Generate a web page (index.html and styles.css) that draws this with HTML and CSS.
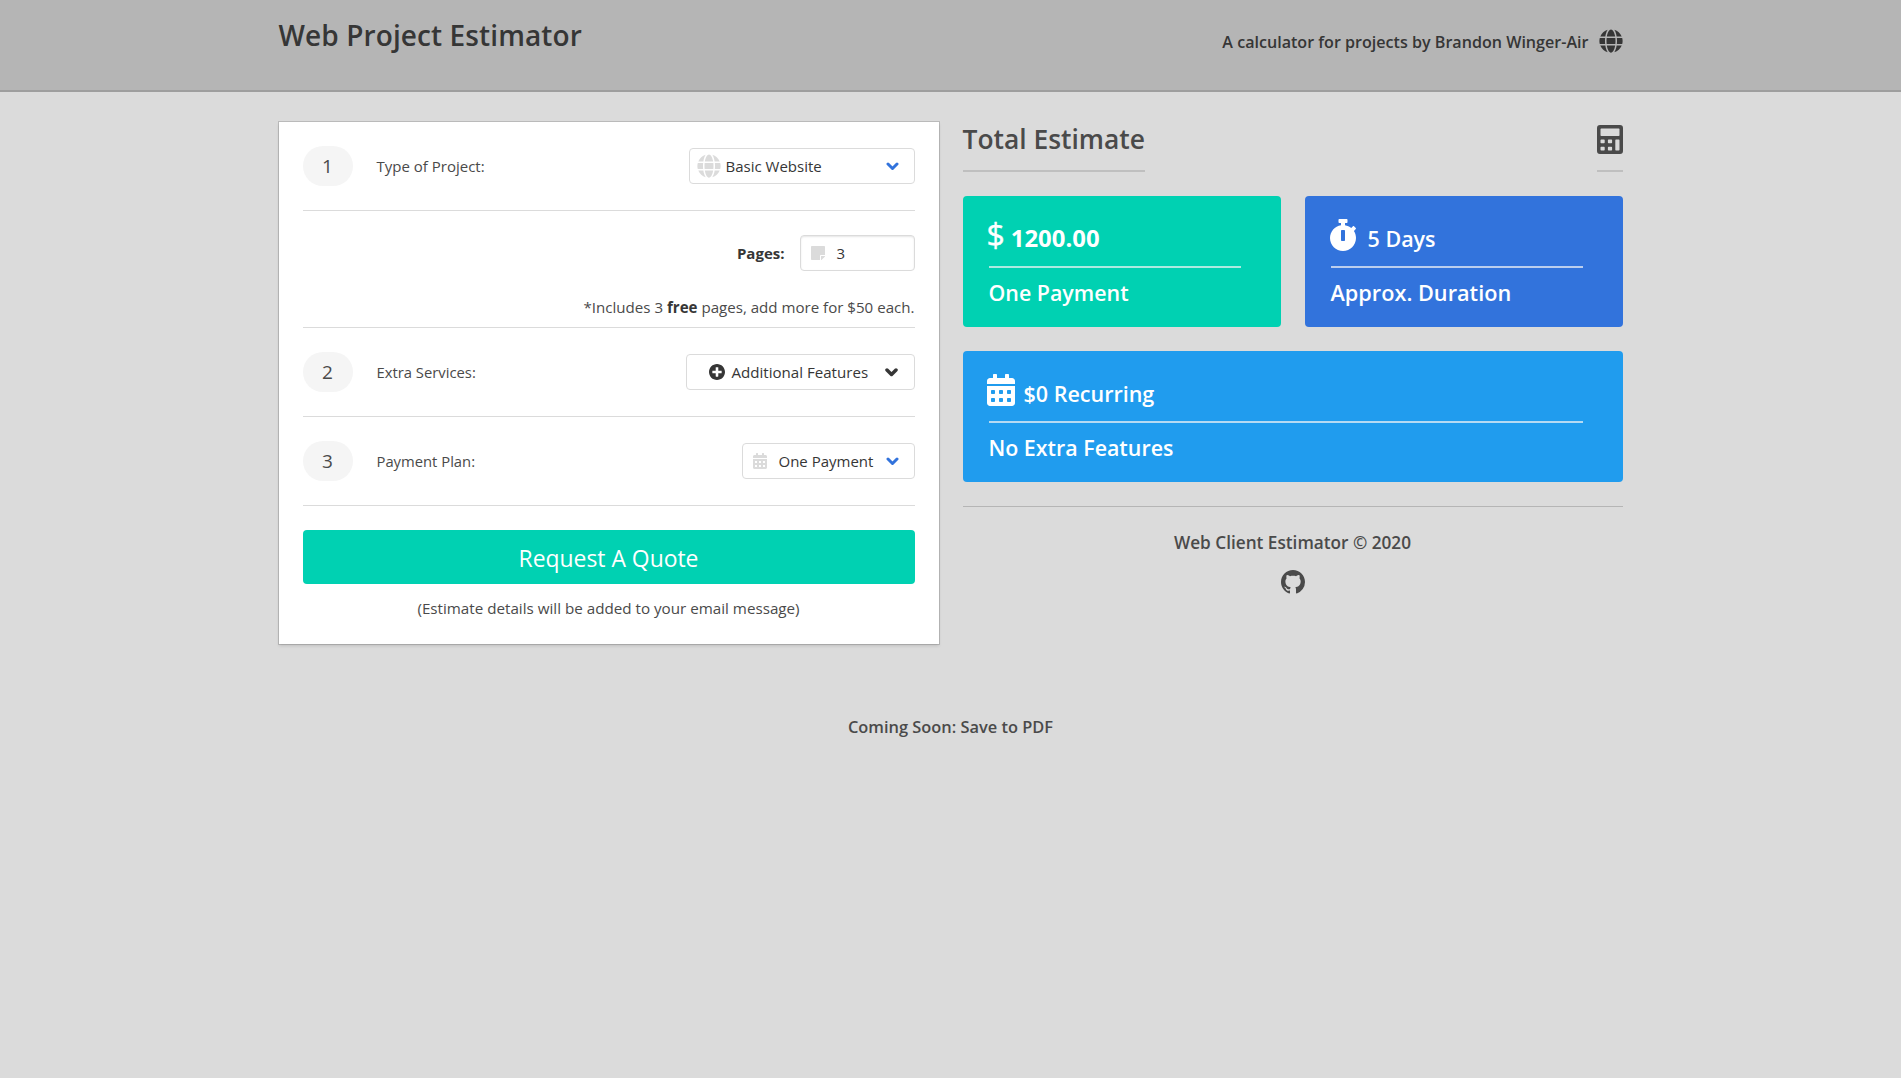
FILE: index.html
```html
<!DOCTYPE html>
<html lang="en">
<head>
<meta charset="utf-8">
<title>Web Project Estimator</title>
<link rel="stylesheet" href="styles.css">
</head>
<body>
<svg class="sprite" aria-hidden="true">
  <symbol id="globe" viewBox="0 0 496 512"><path d="M336.500 160C322 70.700 287.800 8 248 8s-74 62.700-88.500 152h177zM152 256c0 22.200 1.200 43.500 3.300 64h185.300c2.100-20.500 3.300-41.800 3.300-64s-1.200-43.500-3.300-64H155.300c-2.100 20.500-3.300 41.800-3.300 64zm324.700-96c-28.600-67.900-86.500-120.400-158-141.600 24.400 33.800 41.200 84.700 50 141.600h108zM177.200 18.400C105.800 39.600 47.800 92.100 19.300 160h108c8.700-56.900 25.500-107.800 49.900-141.600zM487.400 192H372.700c2.100 21 3.300 42.500 3.300 64s-1.200 43-3.300 64h114.600c5.500-20.500 8.600-41.800 8.600-64s-3.100-43.500-8.500-64zM120 256c0-21.500 1.200-43 3.300-64H8.600C3.200 212.500 0 233.800 0 256s3.200 43.500 8.600 64h114.600c-2-21-3.200-42.500-3.200-64zm39.500 96c14.500 89.300 48.700 152 88.500 152s74-62.700 88.500-152h-177zm159.300 141.600c71.400-21.200 129.400-73.700 158-141.600h-108c-8.800 56.900-25.600 107.800-50 141.600zM19.300 352c28.600 67.900 86.500 120.400 158 141.600-24.400-33.800-41.200-84.700-50-141.600h-108z"/></symbol>
  <symbol id="calendar" viewBox="0 0 448 512"><path d="M0 464c0 26.500 21.500 48 48 48h352c26.500 0 48-21.500 48-48V192H0v272zm320-196c0-6.600 5.400-12 12-12h40c6.600 0 12 5.400 12 12v40c0 6.600-5.400 12-12 12h-40c-6.600 0-12-5.400-12-12v-40zm0 128c0-6.600 5.400-12 12-12h40c6.600 0 12 5.400 12 12v40c0 6.600-5.400 12-12 12h-40c-6.600 0-12-5.400-12-12v-40zM192 268c0-6.600 5.400-12 12-12h40c6.600 0 12 5.400 12 12v40c0 6.600-5.400 12-12 12h-40c-6.600 0-12-5.400-12-12v-40zm0 128c0-6.600 5.400-12 12-12h40c6.600 0 12 5.400 12 12v40c0 6.600-5.400 12-12 12h-40c-6.600 0-12-5.400-12-12v-40zM64 268c0-6.600 5.400-12 12-12h40c6.600 0 12 5.400 12 12v40c0 6.600-5.400 12-12 12H76c-6.600 0-12-5.400-12-12v-40zm0 128c0-6.600 5.400-12 12-12h40c6.600 0 12 5.400 12 12v40c0 6.600-5.400 12-12 12H76c-6.600 0-12-5.400-12-12v-40zM400 64h-48V16c0-8.800-7.200-16-16-16h-32c-8.800 0-16 7.200-16 16v48H160V16c0-8.800-7.200-16-16-16h-32c-8.800 0-16 7.200-16 16v48H48C21.500 64 0 85.500 0 112v48h448v-48c0-26.500-21.500-48-48-48z"/></symbol>
  <symbol id="chevron" viewBox="0 0 13 9"><path d="M2 2l4.500 4.500L11 2" fill="none" stroke="currentColor" stroke-linecap="round" stroke-linejoin="round"/></symbol>
</svg>

<header class="header">
  <div class="container header-inner">
    <h1 class="header-title">Web Project Estimator</h1>
    <div class="tagline"><span>A calculator for projects by Brandon Winger-Air</span><svg class="icon-24"><use href="#globe"/></svg></div>
  </div>
</header>

<main class="container columns">
  <section class="box">
    <div class="row">
      <span class="badge">1</span><span class="label">Type of Project:</span>
      <div class="control select-type">
        <svg class="icon-24 muted"><use href="#globe"/></svg><span class="value">Basic Website</span><svg class="chevron"><use href="#chevron"/></svg>
      </div>
    </div>
    <div class="pages">
      <div class="pages-field">
        <label class="pages-label">Pages:</label>
        <div class="control input-pages">
          <svg class="icon-note muted" viewBox="0 32 448 448"><path d="M312 320h136V56c0-13.300-10.700-24-24-24H24C10.700 32 0 42.700 0 56v400c0 13.300 10.700 24 24 24h264V344c0-13.200 10.800-24 24-24zm129 55l-98 98c-4.500 4.500-10.600 7-17 7h-6V352h128v6.100c0 6.300-2.500 12.400-7 16.900z"/></svg><span>3</span>
        </div>
      </div>
      <p class="pages-hint">*Includes 3 <strong>free</strong> pages, add more for $50 each.</p>
    </div>
    <div class="row">
      <span class="badge">2</span><span class="label tight">Extra Services:</span>
      <div class="control button-features">
        <svg class="icon-plus" viewBox="8 8 496 496"><path d="M256 8C119 8 8 119 8 256s111 248 248 248 248-111 248-248S393 8 256 8zm144 276c0 6.600-5.400 12-12 12h-92v92c0 6.600-5.400 12-12 12h-56c-6.600 0-12-5.400-12-12v-92h-92c-6.600 0-12-5.400-12-12v-56c0-6.600 5.400-12 12-12h92v-92c0-6.600 5.400-12 12-12h56c6.600 0 12 5.400 12 12v92h92c6.600 0 12 5.400 12 12v56z"/></svg><span class="value">Additional Features</span><svg class="chevron dark"><use href="#chevron"/></svg>
      </div>
    </div>
    <div class="row">
      <span class="badge">3</span><span class="label tight">Payment Plan:</span>
      <div class="control select-plan">
        <svg class="icon-calendar muted"><use href="#calendar"/></svg><span class="value">One Payment</span><svg class="chevron"><use href="#chevron"/></svg>
      </div>
    </div>
    <a class="quote-button">Request A Quote</a>
    <p class="quote-hint">(Estimate details will be added to your email message)</p>
  </section>

  <section class="estimate">
    <div class="estimate-head">
      <h2 class="estimate-title">Total Estimate</h2>
      <div class="estimate-icon"><svg class="icon-calculator" viewBox="0 0 26 29"><path fill-rule="evenodd" d="M3 0h20a3 3 0 0 1 3 3v23a3 3 0 0 1-3 3H3a3 3 0 0 1-3-3V3a3 3 0 0 1 3-3zM4.200 3.600a.7.700 0 0 0-.7.700v6a.7.700 0 0 0 .7.700h17.600a.7.700 0 0 0 .7-.7v-6a.7.700 0 0 0-.7-.7zM4.200 14.500h2.800a.7.700 0 0 1 .7.700v2.300a.7.700 0 0 1-.7.700H4.200a.7.700 0 0 1-.7-.7v-2.300a.7.700 0 0 1 .7-.7zM11.600 14.500h2.800a.7.700 0 0 1 .7.700v2.300a.7.700 0 0 1-.7.700h-2.800a.7.700 0 0 1-.7-.7v-2.300a.7.700 0 0 1 .7-.7zM4.200 21.700h2.800a.7.700 0 0 1 .7.700v2.300a.7.700 0 0 1-.7.700H4.200a.7.700 0 0 1-.7-.7v-2.300a.7.700 0 0 1 .7-.7zM11.600 21.700h2.800a.7.700 0 0 1 .7.700v2.300a.7.700 0 0 1-.7.700h-2.800a.7.700 0 0 1-.7-.7v-2.300a.7.700 0 0 1 .7-.7zM19 14.500h2.800a.7.700 0 0 1 .7.700v9.500a.7.700 0 0 1-.7.700H19a.7.700 0 0 1-.7-.7v-9.500a.7.700 0 0 1 .7-.7z"/></svg></div>
    </div>
    <div class="cards">
      <article class="card card-total">
        <div class="card-top"><span class="dollar">$</span><strong class="amount">1200.00</strong></div>
        <p class="card-note">One Payment</p>
      </article>
      <article class="card card-duration">
        <div class="card-top"><svg class="card-icon" viewBox="0 0 448 512"><path d="M432 304c0 114.900-93.100 208-208 208S16 418.900 16 304c0-104 76.300-190.200 176-205.500V64h-28c-6.600 0-12-5.400-12-12V12c0-6.600 5.400-12 12-12h120c6.600 0 12 5.400 12 12v40c0 6.600-5.400 12-12 12h-28v34.500c37.500 5.800 71.700 21.600 99.700 44.600l27.500-27.500c4.700-4.700 12.300-4.700 17 0l28.300 28.300c4.700 4.700 4.700 12.300 0 17l-29.400 29.400-.6.600C419.700 223.300 432 262.200 432 304zm-176 36V188.500c0-6.600-5.400-12-12-12h-40c-6.600 0-12 5.400-12 12V340c0 6.600 5.400 12 12 12h40c6.600 0 12-5.400 12-12z"/></svg><span>5 Days</span></div>
        <p class="card-note">Approx. Duration</p>
      </article>
      <article class="card card-recurring">
        <div class="card-top"><svg class="card-icon"><use href="#calendar"/></svg><span>$0 Recurring</span></div>
        <p class="card-note">No Extra Features</p>
      </article>
    </div>
    <footer class="footer">
      <p>Web Client Estimator © 2020</p>
      <svg class="icon-24" viewBox="0 0 16 16"><path d="M8 0C3.580 0 0 3.580 0 8c0 3.540 2.290 6.530 5.470 7.590.4.070.55-.17.55-.38 0-.19-.01-.82-.01-1.490-2.010.37-2.530-.49-2.690-.94-.09-.23-.48-.94-.82-1.130-.28-.15-.68-.52-.01-.53.63-.01 1.080.58 1.230.82.72 1.210 1.870.87 2.330.66.070-.52.28-.87.510-1.070-1.780-.2-3.640-.89-3.640-3.950 0-.87.310-1.590.820-2.150-.08-.2-.36-1.020.080-2.120 0 0 .67-.21 2.200.82.640-.18 1.320-.27 2-.27.680 0 1.360.09 2 .27 1.530-1.040 2.200-.82 2.200-.82.440 1.100.160 1.920.080 2.120.510.560.820 1.270.820 2.150 0 3.070-1.870 3.750-3.650 3.950.290.250.540.730.540 1.480 0 1.070-.01 1.930-.01 2.200 0 .21.150.46.550.38A8.013 8.013 0 0 0 16 8c0-4.420-3.580-8-8-8z"/></svg>
    </footer>
  </section>
</main>

<p class="coming-soon">Coming Soon: Save to PDF</p>
</body>
</html>
```
FILE: styles.css
```css
* { box-sizing: border-box; margin: 0; }
body {
  min-height: 100vh;
  background: #dbdbdb;
  color: #4a4a4a;
  font: 400 15px/24px "Open Sans", "Noto Sans", sans-serif;
}
svg { display: block; flex: none; fill: currentColor; }
strong { color: #363636; }
.sprite { position: absolute; width: 0; height: 0; }
.container { width: 1344px; margin: 0 auto; }
.icon-24 { width: 24px; height: 24px; }
.muted { color: #dbdbdb; }

.header { height: 92px; background: #b5b5b5; border-bottom: 2px solid #9e9e9e; color: #363636; }
.header-inner { display: flex; justify-content: space-between; align-items: flex-start; }
.header-title { margin-top: 21px; font-size: 28px; line-height: 28px; font-weight: 600; letter-spacing: .1px; }
.tagline { display: flex; gap: 10px; margin-top: 29px; font-size: 16.1px; line-height: 26px; font-weight: 600; }

.columns { display: grid; grid-template-columns: 660px 660px; gap: 24px; align-items: start; padding-top: 30px; }
.box { height: 522px; padding: 0 24px; background: #fff; box-shadow: 0 0 0 1px rgba(10, 10, 10, .15), 0 2px 3px rgba(10, 10, 10, .12); }
.row { display: flex; align-items: center; height: 89px; border-bottom: 1px solid #dbdbdb; }
.badge { width: 50px; height: 40px; border-radius: 20px; background: #f5f5f5; font-size: 19px; line-height: 40px; text-align: center; }
.label { margin: 0 auto 0 24px; }
.tight { font-size: 14.8px; }
.control { display: flex; align-items: center; height: 36px; border: 1px solid #dbdbdb; border-radius: 4px; background: #fff; color: #363636; }
.value { margin-right: auto; white-space: nowrap; }
.chevron { width: 13px; height: 9px; color: #3273dc; stroke-width: 3px; }
.chevron.dark { color: #363636; stroke-width: 3.5px; }
.select-type { width: 226px; padding: 0 15px 0 7px; gap: 5px; }
.select-plan { width: 173px; padding: 0 15px 0 10px; gap: 12px; }
.button-features { width: 229px; padding: 0 16px 0 22px; gap: 7px; font-size: 15.1px; }
.icon-plus { width: 16px; height: 16px; }
.icon-calendar { width: 14px; height: 16px; }
.icon-note { width: 14px; height: 14px; }

.pages { height: 117px; padding-top: 24px; border-bottom: 1px solid #dbdbdb; }
.pages-field { display: flex; align-items: center; justify-content: flex-end; gap: 15px; }
.pages-label { font-weight: 700; color: #363636; }
.input-pages { width: 115px; padding: 0 10px; gap: 12px; box-shadow: inset 0 1px 2px rgba(10, 10, 10, .1); }
.pages-hint { margin-top: 24px; font-size: 15.1px; text-align: right; }
.quote-button { display: block; height: 54px; margin-top: 24px; padding-top: 2px; border-radius: 4px; background: #00d1b2; color: #fff; font-size: 22.9px; line-height: 54px; text-align: center; }
.quote-hint { margin-top: 12px; font-size: 15.2px; text-align: center; }

.estimate-head { display: flex; justify-content: space-between; height: 50px; margin-bottom: 24px; }
.estimate-title { border-bottom: 2px solid #bfbfbf; font-size: 26.4px; line-height: 35px; font-weight: 600; }
.estimate-icon { padding-top: 3px; border-bottom: 2px solid #bfbfbf; }
.icon-calculator { width: 26px; height: 29px; }
.cards { display: grid; grid-template-columns: 1fr 1fr; gap: 24px; padding-bottom: 24px; border-bottom: 1px solid #b5b5b5; }
.card { height: 131px; padding: 22px 40px 0 26px; border-radius: 4px; color: #fff; font-size: 21.5px; font-weight: 600; }
.card-total { background: #00d1b2; }
.card-duration { background: #3273dc; }
.card-recurring { grid-column: 1 / 3; background: #209cee; }
.card-top { display: flex; gap: 10px; height: 50px; padding-top: 1px; border-bottom: 2px solid rgba(245, 245, 245, .7); line-height: 39px; }
.card-icon { width: 28px; height: 32px; margin-left: -2px; }
.card-note { font-size: 21.4px; line-height: 49px; }
.card-total .card-top { align-items: baseline; gap: 6px; line-height: 31px; }
.dollar { margin-left: -2px; font-size: 32px; font-weight: 400; -webkit-text-stroke: .4px currentColor; }
.amount { color: inherit; font-size: 23.9px; font-weight: 700; }
.card-duration .card-note { font-size: 21.7px; }
.card-duration .card-top { gap: 11px; }
.card-recurring .card-top { gap: 9px; }

.footer { display: flex; flex-direction: column; align-items: center; gap: 15px; padding-top: 24px; font-size: 17.2px; font-weight: 600; }
.coming-soon { margin-top: 71px; font-size: 16.4px; font-weight: 600; text-align: center; }
```
